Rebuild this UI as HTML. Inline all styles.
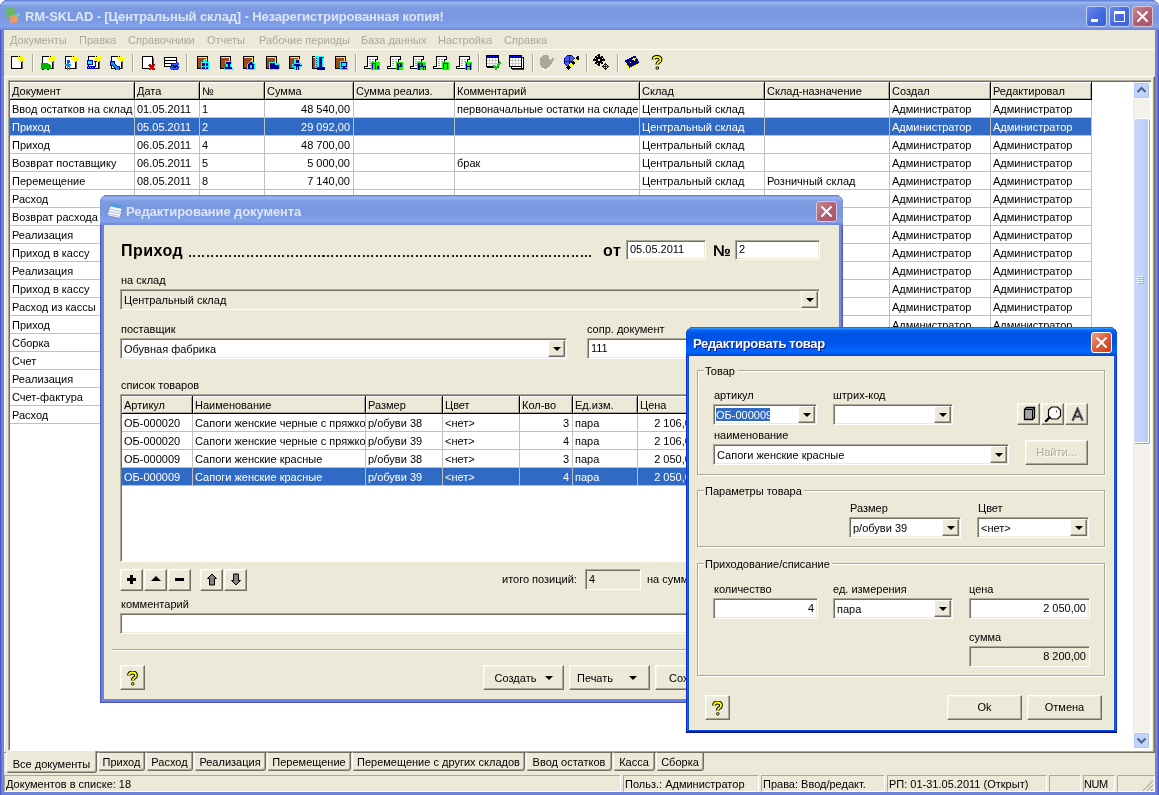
<!DOCTYPE html><html><head><meta charset="utf-8"><title>RM-SKLAD</title><style>
html,body{margin:0;padding:0}
body{width:1159px;height:795px;overflow:hidden;position:relative;background:#fff;font-family:"Liberation Sans",sans-serif;font-size:11px;color:#000;line-height:13px}
div,span{box-sizing:border-box}
.a{position:absolute}
.t{position:absolute;white-space:nowrap;line-height:13px;height:13px}
.face{background:#ECE9D8}
/* main window */
#mw{left:0;top:0;width:1159px;height:796px;border-radius:8px 8px 0 0;background:#7B98E2;overflow:hidden;box-shadow:inset 0 0 0 1px #4E56C4,inset 0 0 0 2px #6676D6,inset 0 0 0 3px #708ADF,inset 0 0 0 4px #6882DA}
#mt{left:0;top:0;width:1159px;height:30px;background:linear-gradient(#6686DE 0,#6686DE 1px,#9BB5EF 2px,#93AEEC 4px,#7F9CE4 6px,#7A97E1 12px,#7B99E3 20px,#82A2EA 26px,#7C98E4 28px,#7088DE 29px,#7088DE 30px)}
.ttl{position:absolute;white-space:nowrap;font-weight:bold;font-size:13px;line-height:16px}
.cb{position:absolute;width:21px;height:21px;border-radius:3px;border:1px solid #fff}
/* grid */
.gh{position:absolute;height:18px;top:0;background:#ECE9D8;border-right:1px solid #000;border-bottom:1px solid #000;box-shadow:inset 1px 1px 0 #fff, inset -1px -1px 0 #ACA899;padding:3px 0 0 2px;white-space:nowrap;overflow:hidden}
.gc{position:absolute;height:18px;border-right:1px solid #C0C0C0;border-bottom:1px solid #C0C0C0;padding:3px 0 0 2px;white-space:nowrap;overflow:hidden;background:#fff}
.gc.r{text-align:right;padding:3px 3px 0 0}
.sel{background:#316AC5 !important;color:#fff}
.sunk{border:1px solid;border-color:#716F64 #fff #fff #716F64;box-shadow:inset 1px 1px 0 #ACA899, inset -1px -1px 0 #ECE9D8}
.edit{position:absolute;background:#fff;border:1px solid;border-color:#ACA899 #fff #fff #ACA899;box-shadow:inset 1px 1px 0 #716F64, inset -1px -1px 0 #ECE9D8;padding:3px 0 0 4px;white-space:nowrap;overflow:hidden}
.edit.face{background:#ECE9D8}
.cbx{padding-top:4px}
.btn{position:absolute;background:#ECE9D8;border:1px solid;border-color:#fff #716F64 #716F64 #fff;box-shadow:inset -1px -1px 0 #ACA899, inset 1px 1px 0 #F4F2E8;text-align:center;white-space:nowrap}
.dd{position:absolute;width:17px;background:#ECE9D8;border:1px solid;border-color:#fff #716F64 #716F64 #fff;box-shadow:inset -1px -1px 0 #ACA899}
.dd:after{content:"";position:absolute;left:4px;top:6px;border:4px solid transparent;border-top:4px solid #000;border-bottom:0}
.grp{position:absolute;border:1px solid #ACA899;box-shadow:1px 1px 0 #fff, inset 1px 1px 0 #fff}
.grp>span{position:absolute;left:6px;top:-6px;background:#ECE9D8;padding:0 2px 0 1px;line-height:13px;white-space:nowrap}
.tab{position:absolute;top:752px;height:19px;background:#ECE9D8;border:1px solid;border-color:#716F64 #716F64 #716F64 #fff;box-shadow:inset -1px -1px 0 #ACA899;border-radius:0 0 3px 3px;padding:3px 0 0 0;text-align:center;white-space:nowrap}
.sp{position:absolute;top:775px;height:17px;border:1px solid;border-color:#ACA899 #fff #fff #ACA899;padding:2px 0 0 1px;white-space:nowrap;overflow:hidden}
</style></head><body><div id="root" class="a" style="left:0;top:0;width:1159px;height:795px;will-change:transform">
<div id="mw" class="a">
<div id="mt" class="a"></div>
<svg class="a" style="left:5px;top:7px" width="18" height="18" viewBox="0 0 18 18"><rect x="1" y="1" width="9" height="9" rx="1.5" fill="#6DB56A"/><rect x="11" y="5" width="5" height="5" rx="1" fill="#7DB4E8" stroke="#5B9BD8" stroke-width=".8"/><rect x="5" y="8" width="8" height="8" rx="1.5" fill="#E89A66" transform="rotate(-8 9 12)"/></svg>
<div class="ttl" style="left:25px;top:9px;color:#DCE6FA;letter-spacing:-0.14px">RM-SKLAD - [Центральный склад] - Незарегистрированная копия!</div>
<div class="cb" style="left:1086px;top:6px;background:linear-gradient(135deg,#6C8CEA,#456BE0 50%,#3E62D6);border-color:#C0CEF4"><div class="a" style="left:4px;top:12px;width:7px;height:3px;background:#fff"></div></div>
<div class="cb" style="left:1109px;top:6px;background:linear-gradient(135deg,#6C8CEA,#456BE0 50%,#3E62D6);border-color:#C0CEF4"><div class="a" style="left:4px;top:4px;width:11px;height:11px;border:1px solid #fff;border-top:3px solid #fff"></div></div>
<div class="cb" style="left:1132px;top:6px;background:linear-gradient(135deg,#C88A98,#B26074 50%,#A85468);border-color:#DCC4D4"><svg class="a" style="left:3px;top:3px" width="13" height="13" viewBox="0 0 13 13"><path d="M2 2L11 11M11 2L2 11" stroke="#fff" stroke-width="2" stroke-linecap="round"/></svg></div>
<div class="a face" style="left:4px;top:30px;width:1151px;height:762px"></div>
</div>
<div class="t" style="left:10px;top:34px;color:#ACA899">Документы</div>
<div class="t" style="left:79px;top:34px;color:#ACA899">Правка</div>
<div class="t" style="left:128px;top:34px;color:#ACA899">Справочники</div>
<div class="t" style="left:207px;top:34px;color:#ACA899">Отчеты</div>
<div class="t" style="left:259px;top:34px;color:#ACA899">Рабочие периоды</div>
<div class="t" style="left:361px;top:34px;color:#ACA899">База данных</div>
<div class="t" style="left:438px;top:34px;color:#ACA899">Настройка</div>
<div class="t" style="left:504px;top:34px;color:#ACA899">Справка</div>
<div class="a" style="left:4px;top:49px;width:1151px;height:1px;background:#fff"></div>
<div class="a" style="left:4px;top:76px;width:1151px;height:677px;border:1px solid;border-color:#fff #716F64 #716F64 #fff;box-shadow:inset -1px -1px 0 #ACA899"></div>
<svg width="0" height="0" style="position:absolute"><defs><pattern id="pg" width="2" height="2" patternUnits="userSpaceOnUse"><rect width="2" height="2" fill="#00C000"/><rect width="1" height="1" fill="#008000"/><rect x="1" y="1" width="1" height="1" fill="#008000"/></pattern><pattern id="pb" width="2" height="2" patternUnits="userSpaceOnUse"><rect width="2" height="2" fill="#00FFFF"/><rect width="1" height="1" fill="#0000C0"/><rect x="1" y="1" width="1" height="1" fill="#0000C0"/></pattern><pattern id="pr" width="2" height="2" patternUnits="userSpaceOnUse"><rect width="2" height="2" fill="#804000"/><rect width="1" height="1" fill="#C04020"/><rect x="1" y="1" width="1" height="1" fill="#C04020"/></pattern><pattern id="pgl" width="2" height="2" patternUnits="userSpaceOnUse"><rect width="2" height="2" fill="#0000C0"/><rect width="1" height="1" fill="#8090E0"/><rect x="1" y="1" width="1" height="1" fill="#8090E0"/></pattern></defs></svg>
<svg class="a" style="left:10px;top:54px" width="16" height="16" viewBox="0 0 16 16" shape-rendering="crispEdges"><rect x="1.500" y="2.500" width="10" height="12" fill="#fff" stroke="#000"/><rect x="2" y="14" width="10" height="1" fill="#000"/><rect x="12" y="4" width="1" height="11" fill="#606060"/><rect x="10" y="1" width="2" height="7" fill="#FFFF00"/><rect x="7" y="4" width="8" height="2" fill="#FFFF00"/><rect x="9" y="3" width="4" height="4" fill="#FFFF00"/><rect x="8" y="2" width="1" height="1" fill="#FFFF00"/><rect x="13" y="2" width="1" height="1" fill="#FFFF00"/><rect x="8" y="7" width="1" height="1" fill="#FFFF00"/><rect x="13" y="7" width="1" height="1" fill="#FFFF00"/></svg>
<div class="a" style="left:32px;top:54px;width:2px;height:18px;border-left:1px solid #ACA899;border-right:1px solid #fff"></div>
<svg class="a" style="left:41px;top:54px" width="16" height="16" viewBox="0 0 16 16" shape-rendering="crispEdges"><rect x="1.500" y="2.500" width="10" height="12" fill="#fff" stroke="#000"/><rect x="2" y="14" width="10" height="1" fill="#000"/><rect x="12" y="4" width="1" height="11" fill="#606060"/><rect x="10" y="1" width="2" height="7" fill="#FFFF00"/><rect x="7" y="4" width="8" height="2" fill="#FFFF00"/><rect x="9" y="3" width="4" height="4" fill="#FFFF00"/><rect x="8" y="2" width="1" height="1" fill="#FFFF00"/><rect x="13" y="2" width="1" height="1" fill="#FFFF00"/><rect x="8" y="7" width="1" height="1" fill="#FFFF00"/><rect x="13" y="7" width="1" height="1" fill="#FFFF00"/><path d="M0 9h6l4 2v4H0z" fill="#00B400"/><rect x="1" y="15" width="2" height="1" fill="#000"/><rect x="6" y="15" width="2" height="1" fill="#000"/></svg>
<svg class="a" style="left:64px;top:54px" width="16" height="16" viewBox="0 0 16 16" shape-rendering="crispEdges"><rect x="1.500" y="2.500" width="10" height="12" fill="#fff" stroke="#000"/><rect x="2" y="14" width="10" height="1" fill="#000"/><rect x="12" y="4" width="1" height="11" fill="#606060"/><rect x="10" y="1" width="2" height="7" fill="#FFFF00"/><rect x="7" y="4" width="8" height="2" fill="#FFFF00"/><rect x="9" y="3" width="4" height="4" fill="#FFFF00"/><rect x="8" y="2" width="1" height="1" fill="#FFFF00"/><rect x="13" y="2" width="1" height="1" fill="#FFFF00"/><rect x="8" y="7" width="1" height="1" fill="#FFFF00"/><rect x="13" y="7" width="1" height="1" fill="#FFFF00"/><path d="M3 6h3v3h-1v1h2v2H6v4H5v-3H4v3H3v-4H1v-2h2V9H3z" fill="#1090F0"/><rect x="3" y="6" width="3" height="3" fill="#0060E0"/></svg>
<svg class="a" style="left:87px;top:54px" width="16" height="16" viewBox="0 0 16 16" shape-rendering="crispEdges"><rect x="1.500" y="2.500" width="10" height="12" fill="#fff" stroke="#000"/><rect x="2" y="14" width="10" height="1" fill="#000"/><rect x="12" y="4" width="1" height="11" fill="#606060"/><rect x="10" y="1" width="2" height="7" fill="#FFFF00"/><rect x="7" y="4" width="8" height="2" fill="#FFFF00"/><rect x="9" y="3" width="4" height="4" fill="#FFFF00"/><rect x="8" y="2" width="1" height="1" fill="#FFFF00"/><rect x="13" y="2" width="1" height="1" fill="#FFFF00"/><rect x="8" y="7" width="1" height="1" fill="#FFFF00"/><rect x="13" y="7" width="1" height="1" fill="#FFFF00"/><rect x="0" y="6" width="6" height="5" fill="#0000C0"/><rect x="1" y="7" width="4" height="3" fill="#00FFFF"/><rect x="0" y="12" width="8" height="3" fill="#0000C0"/><path d="M1 13.500h6" stroke="#00FFFF" stroke-dasharray="1 1"/><path d="M8.500 7v6M7 7.500h3" stroke="#0000C0"/></svg>
<svg class="a" style="left:110px;top:54px" width="16" height="16" viewBox="0 0 16 16" shape-rendering="crispEdges"><rect x="1.500" y="2.500" width="10" height="12" fill="#fff" stroke="#000"/><rect x="2" y="14" width="10" height="1" fill="#000"/><rect x="12" y="4" width="1" height="11" fill="#606060"/><rect x="10" y="1" width="2" height="7" fill="#FFFF00"/><rect x="7" y="4" width="8" height="2" fill="#FFFF00"/><rect x="9" y="3" width="4" height="4" fill="#FFFF00"/><rect x="8" y="2" width="1" height="1" fill="#FFFF00"/><rect x="13" y="2" width="1" height="1" fill="#FFFF00"/><rect x="8" y="7" width="1" height="1" fill="#FFFF00"/><rect x="13" y="7" width="1" height="1" fill="#FFFF00"/><path d="M0 7h4v2l3 3h2v4H5v-2L2 11H0z" fill="#1090F0" stroke="#0000A0" stroke-width="1"/></svg>
<div class="a" style="left:132px;top:54px;width:2px;height:18px;border-left:1px solid #ACA899;border-right:1px solid #fff"></div>
<svg class="a" style="left:141px;top:54px" width="16" height="16" viewBox="0 0 16 16" shape-rendering="crispEdges"><rect x="1.500" y="2.500" width="10" height="12" fill="#fff" stroke="#000"/><rect x="2" y="14" width="10" height="1" fill="#000"/><rect x="12" y="4" width="1" height="11" fill="#606060"/><path d="M8 10.500L13.500 16M13.500 10.500L8 16" stroke="#E00000" stroke-width="2.800"/></svg>
<svg class="a" style="left:164px;top:54px" width="16" height="16" viewBox="0 0 16 16" shape-rendering="crispEdges"><rect x=".5" y="3.500" width="12" height="9" fill="#fff" stroke="#000"/><path d="M1 6.500h11M1 9.500h11" stroke="#000"/><rect x="12" y="4" width="1" height="9" fill="#000"/><path d="M7 12V9h5V7.500l3 2.500-3 2.500V11H9v1z" fill="#2060FF" stroke="#0000C0" stroke-width=".8"/><path d="M14 12v3H9v1.500L6 14l3-2.500V13h3v-1z" fill="#2060FF" stroke="#0000C0" stroke-width=".8"/></svg>
<div class="a" style="left:186px;top:54px;width:2px;height:18px;border-left:1px solid #ACA899;border-right:1px solid #fff"></div>
<svg class="a" style="left:195px;top:54px" width="16" height="16" viewBox="0 0 16 16" shape-rendering="crispEdges"><path d="M2.500 14.500V3.500Q2.500 2.500 3.500 2.500H11Q12.500 2.500 12.500 4V14.500z" fill="#9A4A18" stroke="#000"/><path d="M3 3.500H10.500Q11.500 3.500 11.500 4.500V9" fill="none" stroke="#FFFF00"/><rect x="6" y="8" width="8" height="8" fill="#00FFFF"/><path d="M8 6l2-1 2 1v2H8z" fill="#00FFFF"/><rect x="7" y="9" width="2.500" height="2.500" fill="#000090"/><rect x="10.500" y="9" width="2.500" height="2.500" fill="#000090"/><rect x="7" y="12.500" width="2.500" height="2.500" fill="#000090"/><rect x="10.500" y="12.500" width="2.500" height="2.500" fill="#000090"/></svg>
<svg class="a" style="left:218px;top:54px" width="16" height="16" viewBox="0 0 16 16" shape-rendering="crispEdges"><path d="M2.500 14.500V3.500Q2.500 2.500 3.500 2.500H11Q12.500 2.500 12.500 4V14.500z" fill="#9A4A18" stroke="#000"/><path d="M3 3.500H10.500Q11.500 3.500 11.500 4.500V9" fill="none" stroke="#FFFF00"/><path d="M7 7h7v3h-1v4h2v2H6v-2h2v-4H7z" fill="#00FFFF"/><path d="M8 8h5v1.500h-1.500V13H14v2H7v-2h2.500V9.500H8z" fill="#000090"/></svg>
<svg class="a" style="left:241px;top:54px" width="16" height="16" viewBox="0 0 16 16" shape-rendering="crispEdges"><path d="M2.500 14.500V3.500Q2.500 2.500 3.500 2.500H11Q12.500 2.500 12.500 4V14.500z" fill="#9A4A18" stroke="#000"/><path d="M3 3.500H10.500Q11.500 3.500 11.500 4.500V9" fill="none" stroke="#FFFF00"/><path d="M10 6l5 5h-1v5H6v-5H5z" fill="#00FFFF"/><path d="M10 7.500l3.500 3.500H13v4H7v-4H6.500z" fill="#000090"/><rect x="9" y="11" width="2" height="3" fill="#00FFFF"/></svg>
<svg class="a" style="left:264px;top:54px" width="16" height="16" viewBox="0 0 16 16" shape-rendering="crispEdges"><path d="M2.500 14.500V3.500Q2.500 2.500 3.500 2.500H11Q12.500 2.500 12.500 4V14.500z" fill="#9A4A18" stroke="#000"/><path d="M3 3.500H10.500Q11.500 3.500 11.500 4.500V9" fill="none" stroke="#FFFF00"/><path d="M5 8h6v1h3l2 2v4h-2v1h-3v-1H9v1H6v-1H5z" fill="#00FFFF"/><path d="M6 9h4.500v1.500H13.500l1.500 1.500v2.500H6z" fill="#000090"/></svg>
<svg class="a" style="left:287px;top:54px" width="16" height="16" viewBox="0 0 16 16" shape-rendering="crispEdges"><path d="M2.500 14.500V3.500Q2.500 2.500 3.500 2.500H11Q12.500 2.500 12.500 4V14.500z" fill="#9A4A18" stroke="#000"/><path d="M3 3.500H10.500Q11.500 3.500 11.500 4.500V9" fill="none" stroke="#FFFF00"/><path d="M7 5h6v4h2v4h-2v3H7v-3H5v-3h2z" fill="#00FFFF"/><path d="M8.500 6h3v3h-3zM7 10h6v1h1.500v1H13v0h-1.500v4h-1v-3h-1v3h-1v-4H7v0H5.500v-1H7z" fill="#000090"/></svg>
<svg class="a" style="left:310px;top:54px" width="16" height="16" viewBox="0 0 16 16" shape-rendering="crispEdges"><path d="M2.500 14.500V3.500Q2.500 2.500 3.500 2.500H11Q12.500 2.500 12.500 4V14.500z" fill="#9A4A18" stroke="#000"/><path d="M3 3.500H10.500Q11.500 3.500 11.500 4.500V9" fill="none" stroke="#FFFF00"/><rect x="5" y="2" width="8" height="12" fill="#00FFFF"/><rect x="9" y="3" width="2.500" height="10" fill="#000090"/><path d="M6.500 4v9" stroke="#0060D0" stroke-dasharray="1 1"/><path d="M7 13h8v3H7z" fill="#000090"/><rect x="12" y="3" width="2" height="1" fill="#000090"/></svg>
<svg class="a" style="left:333px;top:54px" width="16" height="16" viewBox="0 0 16 16" shape-rendering="crispEdges"><path d="M2.500 14.500V3.500Q2.500 2.500 3.500 2.500H11Q12.500 2.500 12.500 4V14.500z" fill="#9A4A18" stroke="#000"/><path d="M3 3.500H10.500Q11.500 3.500 11.500 4.500V9" fill="none" stroke="#FFFF00"/><rect x="7" y="7" width="8" height="9" fill="#00FFFF"/><rect x="8.500" y="8.500" width="5" height="3.500" fill="none" stroke="#000090"/><path d="M11 12v2M8 14.500h6" stroke="#000090" stroke-width="1.200"/></svg>
<div class="a" style="left:355px;top:54px;width:2px;height:18px;border-left:1px solid #ACA899;border-right:1px solid #fff"></div>
<svg class="a" style="left:364px;top:54px" width="16" height="16" viewBox="0 0 16 16" shape-rendering="crispEdges"><path d="M3.500 3.500Q3.500 2.500 5 2.500H12.500Q13.500 2.500 13.500 4V5.500H11.500V14.500H2Q.5 14.500 .5 13.500Q.5 12.500 2 12.500H3.500z" fill="#fff" stroke="#000"/><path d="M5 5h2M8 5h2M5 7h2M8 7h2M5 9h2M5 11h2" stroke="#A0A0A0"/><rect x="1" y="14" width="10" height="1" fill="#000"/><rect x="7" y="8" width="9" height="8" fill="#00FF00"/><path d="M8 9.500h4M8.500 9v6M11.500 9v6" stroke="#000080" stroke-width="1.200" fill="none"/><rect x="13" y="12" width="1.500" height="3" fill="#000080"/></svg>
<svg class="a" style="left:387px;top:54px" width="16" height="16" viewBox="0 0 16 16" shape-rendering="crispEdges"><path d="M3.500 3.500Q3.500 2.500 5 2.500H12.500Q13.500 2.500 13.500 4V5.500H11.500V14.500H2Q.5 14.500 .5 13.500Q.5 12.500 2 12.500H3.500z" fill="#fff" stroke="#000"/><path d="M5 5h2M8 5h2M5 7h2M8 7h2M5 9h2M5 11h2" stroke="#A0A0A0"/><rect x="1" y="14" width="10" height="1" fill="#000"/><rect x="9" y="8" width="7" height="8" fill="#00FF00"/><path d="M11 9v6.500M11 9.500h3v3h-3" stroke="#000080" stroke-width="1.400" fill="none"/></svg>
<svg class="a" style="left:410px;top:54px" width="16" height="16" viewBox="0 0 16 16" shape-rendering="crispEdges"><path d="M3.500 3.500Q3.500 2.500 5 2.500H12.500Q13.500 2.500 13.500 4V5.500H11.500V14.500H2Q.5 14.500 .5 13.500Q.5 12.500 2 12.500H3.500z" fill="#fff" stroke="#000"/><path d="M5 5h2M8 5h2M5 7h2M8 7h2M5 9h2M5 11h2" stroke="#A0A0A0"/><rect x="1" y="14" width="10" height="1" fill="#000"/><rect x="7" y="8" width="9" height="8" fill="#00FF00"/><path d="M9 9v6.500M9 9.500h3v3h-3" stroke="#000080" stroke-width="1.400" fill="none"/><path d="M13.500 16v-4h2v4" stroke="#000080" fill="none" stroke-width=".9"/></svg>
<svg class="a" style="left:433px;top:54px" width="16" height="16" viewBox="0 0 16 16" shape-rendering="crispEdges"><path d="M3.500 3.500Q3.500 2.500 5 2.500H12.500Q13.500 2.500 13.500 4V5.500H11.500V14.500H2Q.5 14.500 .5 13.500Q.5 12.500 2 12.500H3.500z" fill="#fff" stroke="#000"/><path d="M5 5h2M8 5h2M5 7h2M8 7h2M5 9h2M5 11h2" stroke="#A0A0A0"/><rect x="1" y="14" width="10" height="1" fill="#000"/><rect x="9" y="8" width="7" height="8" fill="#00FF00"/><path d="M10 9.500h5M10.500 9v6M14.500 9v6" stroke="#000080" stroke-width="1.200" fill="none"/></svg>
<svg class="a" style="left:456px;top:54px" width="16" height="16" viewBox="0 0 16 16" shape-rendering="crispEdges"><path d="M3.500 3.500Q3.500 2.500 5 2.500H12.500Q13.500 2.500 13.500 4V5.500H11.500V14.500H2Q.5 14.500 .5 13.500Q.5 12.500 2 12.500H3.500z" fill="#fff" stroke="#000"/><path d="M5 5h2M8 5h2M5 7h2M8 7h2M5 9h2M5 11h2" stroke="#A0A0A0"/><rect x="1" y="14" width="10" height="1" fill="#000"/><rect x="9" y="8" width="7" height="8" fill="#00FF00"/><path d="M10.500 9v6.500M14.500 9v6.500M10.500 12.500h4" stroke="#000080" stroke-width="1.300" fill="none"/></svg>
<div class="a" style="left:478px;top:54px;width:2px;height:18px;border-left:1px solid #ACA899;border-right:1px solid #fff"></div>
<svg class="a" style="left:485px;top:54px" width="16" height="16" viewBox="0 0 16 16" shape-rendering="crispEdges"><rect x="1.500" y="1.500" width="12" height="11" fill="#fff" stroke="#000"/><rect x="2" y="2" width="11" height="2" fill="#0000E0"/><path d="M2 6.500h11M2 9.500h11M4.500 4v8M7.500 4v8M10.500 4v8" stroke="#C8C8C8"/><rect x="13" y="2" width="1" height="12" fill="#000"/><rect x="2" y="13" width="12" height="1" fill="#000"/><path d="M8.500 11.500L11 14.500L15.500 8" fill="none" stroke="#00D000" stroke-width="2.200"/></svg>
<svg class="a" style="left:508px;top:54px" width="16" height="16" viewBox="0 0 16 16" shape-rendering="crispEdges"><rect x="3.500" y="3.500" width="12" height="11" fill="#fff" stroke="#000"/><rect x="15" y="5" width="1" height="2" fill="#0000E0"/><rect x="4" y="15" width="12" height="1" fill="#404040"/><rect x="1.500" y="1.500" width="12" height="11" fill="#fff" stroke="#000"/><rect x="2" y="2" width="11" height="2" fill="#0000E0"/><path d="M2 6.500h11M2 9.500h11M4.500 4v8M7.500 4v8M10.500 4v8" stroke="#C8C8C8"/><rect x="13" y="2" width="1" height="12" fill="#000"/></svg>
<div class="a" style="left:532px;top:54px;width:2px;height:18px;border-left:1px solid #ACA899;border-right:1px solid #fff"></div>
<svg class="a" style="left:538px;top:54px" width="16" height="16" viewBox="0 0 16 16" shape-rendering="crispEdges"><path d="M2 4l3-3h4l2 2 1 3 3-2 1 1-2 4-2 3-3 3H6l-3-2-1-4z" fill="#ACA899"/><path d="M4 14l2 1.500h3l4-3.500" stroke="#fff" fill="none"/></svg>
<svg class="a" style="left:563px;top:54px" width="16" height="16" viewBox="0 0 16 16" shape-rendering="crispEdges"><circle cx="6.500" cy="7" r="5.500" fill="#4860D8" stroke="#0000A0"/><path d="M6.500 1.500v11M1 7h11" stroke="#0000A0" stroke-width=".8"/><path d="M4 15L16 3" stroke="#000" stroke-width="3"/><path d="M6.500 12.500L9 10M11 8L13.500 5.500" stroke="#FFFF00" stroke-width="3"/></svg>
<div class="a" style="left:586px;top:54px;width:2px;height:18px;border-left:1px solid #ACA899;border-right:1px solid #fff"></div>
<svg class="a" style="left:593px;top:54px" width="16" height="16" viewBox="0 0 16 16" shape-rendering="crispEdges"><g fill="#000"><circle cx="6" cy="6" r="3"/><circle cx="6" cy="1.800" r="1.600"/><circle cx="6" cy="10.200" r="1.600"/><circle cx="1.800" cy="6" r="1.600"/><circle cx="10.200" cy="6" r="1.600"/><circle cx="3" cy="3" r="1.500"/><circle cx="9" cy="3" r="1.500"/><circle cx="3" cy="9" r="1.500"/><circle cx="9" cy="9" r="1.500"/></g><circle cx="6" cy="6" r="1.300" fill="#ECE9D8"/><path d="M12.500 9.500l3 3-3 3-3-3z" fill="#ECE9D8" stroke="#000"/><path d="M12.500 10v5M10 12.500h5" stroke="#000" stroke-width=".8"/></svg>
<div class="a" style="left:617px;top:54px;width:2px;height:18px;border-left:1px solid #ACA899;border-right:1px solid #fff"></div>
<svg class="a" style="left:624px;top:54px" width="16" height="16" viewBox="0 0 16 16" shape-rendering="crispEdges"><path d="M1 7L11 2l4 7L5 14z" fill="#000090" stroke="#000090"/><path d="M1.500 8.500L5 14.500L15 9.500" fill="none" stroke="#FFFF00" stroke-width="1.200"/><path d="M8 5.500l3-1-1 2.500" fill="none" stroke="#FFFF00"/><rect x="6" y="8" width="1" height="1" fill="#FFFF00"/></svg>
<svg class="a" style="left:649px;top:54px" width="16" height="16" viewBox="0 0 16 16" shape-rendering="crispEdges"><g shape-rendering="auto"><path d="M4.500 5.500Q4.500 2.800 8 2.800Q11.500 2.800 11.500 5.500Q11.500 7.200 9.500 8.300Q8.300 9 8.300 10.500" fill="none" stroke="#000" stroke-width="3.800"/><path d="M4.500 5.500Q4.500 2.800 8 2.800Q11.500 2.800 11.500 5.500Q11.500 7.200 9.500 8.300Q8.300 9 8.300 10.500" fill="none" stroke="#FFFF00" stroke-width="1.800"/><circle cx="8.300" cy="14" r="1.300" fill="#FFFF00" stroke="#000" stroke-width="1"/></g></svg>
<div class="a" style="left:8px;top:80px;width:1144px;height:671px;background:#fff;border:1px solid;border-color:#ACA899 #fff #fff #ACA899;box-shadow:inset 1px 1px 0 #716F64"></div>
<div class="a" style="left:0;top:82px;width:1092px;height:340px">
<div class="gh" style="left:10px;width:125px">Документ</div>
<div class="gh" style="left:135px;width:65px">Дата</div>
<div class="gh" style="left:200px;width:65px">№</div>
<div class="gh" style="left:265px;width:89px">Сумма</div>
<div class="gh" style="left:354px;width:101px">Сумма реализ.</div>
<div class="gh" style="left:455px;width:185px">Комментарий</div>
<div class="gh" style="left:640px;width:125px">Склад</div>
<div class="gh" style="left:765px;width:125px">Склад-назначение</div>
<div class="gh" style="left:890px;width:101px">Создал</div>
<div class="gh" style="left:991px;width:101px">Редактировал</div>
<div class="gc" style="left:10px;top:18px;width:125px">Ввод остатков на склад</div>
<div class="gc" style="left:135px;top:18px;width:65px">01.05.2011</div>
<div class="gc" style="left:200px;top:18px;width:65px">1</div>
<div class="gc r" style="left:265px;top:18px;width:89px">48 540,00</div>
<div class="gc" style="left:354px;top:18px;width:101px"></div>
<div class="gc" style="left:455px;top:18px;width:185px">первоначальные остатки на складе</div>
<div class="gc" style="left:640px;top:18px;width:125px">Центральный склад</div>
<div class="gc" style="left:765px;top:18px;width:125px"></div>
<div class="gc" style="left:890px;top:18px;width:101px">Администратор</div>
<div class="gc" style="left:991px;top:18px;width:101px">Администратор</div>
<div class="gc sel" style="left:10px;top:36px;width:125px">Приход</div>
<div class="gc sel" style="left:135px;top:36px;width:65px">05.05.2011</div>
<div class="gc sel" style="left:200px;top:36px;width:65px">2</div>
<div class="gc r sel" style="left:265px;top:36px;width:89px">29 092,00</div>
<div class="gc sel" style="left:354px;top:36px;width:101px"></div>
<div class="gc sel" style="left:455px;top:36px;width:185px"></div>
<div class="gc sel" style="left:640px;top:36px;width:125px">Центральный склад</div>
<div class="gc sel" style="left:765px;top:36px;width:125px"></div>
<div class="gc sel" style="left:890px;top:36px;width:101px">Администратор</div>
<div class="gc sel" style="left:991px;top:36px;width:101px">Администратор</div>
<div class="gc" style="left:10px;top:54px;width:125px">Приход</div>
<div class="gc" style="left:135px;top:54px;width:65px">06.05.2011</div>
<div class="gc" style="left:200px;top:54px;width:65px">4</div>
<div class="gc r" style="left:265px;top:54px;width:89px">48 700,00</div>
<div class="gc" style="left:354px;top:54px;width:101px"></div>
<div class="gc" style="left:455px;top:54px;width:185px"></div>
<div class="gc" style="left:640px;top:54px;width:125px">Центральный склад</div>
<div class="gc" style="left:765px;top:54px;width:125px"></div>
<div class="gc" style="left:890px;top:54px;width:101px">Администратор</div>
<div class="gc" style="left:991px;top:54px;width:101px">Администратор</div>
<div class="gc" style="left:10px;top:72px;width:125px">Возврат поставщику</div>
<div class="gc" style="left:135px;top:72px;width:65px">06.05.2011</div>
<div class="gc" style="left:200px;top:72px;width:65px">5</div>
<div class="gc r" style="left:265px;top:72px;width:89px">5 000,00</div>
<div class="gc" style="left:354px;top:72px;width:101px"></div>
<div class="gc" style="left:455px;top:72px;width:185px">брак</div>
<div class="gc" style="left:640px;top:72px;width:125px">Центральный склад</div>
<div class="gc" style="left:765px;top:72px;width:125px"></div>
<div class="gc" style="left:890px;top:72px;width:101px">Администратор</div>
<div class="gc" style="left:991px;top:72px;width:101px">Администратор</div>
<div class="gc" style="left:10px;top:90px;width:125px">Перемещение</div>
<div class="gc" style="left:135px;top:90px;width:65px">08.05.2011</div>
<div class="gc" style="left:200px;top:90px;width:65px">8</div>
<div class="gc r" style="left:265px;top:90px;width:89px">7 140,00</div>
<div class="gc" style="left:354px;top:90px;width:101px"></div>
<div class="gc" style="left:455px;top:90px;width:185px"></div>
<div class="gc" style="left:640px;top:90px;width:125px">Центральный склад</div>
<div class="gc" style="left:765px;top:90px;width:125px">Розничный склад</div>
<div class="gc" style="left:890px;top:90px;width:101px">Администратор</div>
<div class="gc" style="left:991px;top:90px;width:101px">Администратор</div>
<div class="gc" style="left:10px;top:108px;width:125px">Расход</div>
<div class="gc" style="left:135px;top:108px;width:65px">10.05.2011</div>
<div class="gc" style="left:200px;top:108px;width:65px">9</div>
<div class="gc r" style="left:265px;top:108px;width:89px">8 970,00</div>
<div class="gc" style="left:354px;top:108px;width:101px"></div>
<div class="gc" style="left:455px;top:108px;width:185px"></div>
<div class="gc" style="left:640px;top:108px;width:125px">Центральный склад</div>
<div class="gc" style="left:765px;top:108px;width:125px"></div>
<div class="gc" style="left:890px;top:108px;width:101px">Администратор</div>
<div class="gc" style="left:991px;top:108px;width:101px">Администратор</div>
<div class="gc" style="left:10px;top:126px;width:125px">Возврат расхода</div>
<div class="gc" style="left:135px;top:126px;width:65px"></div>
<div class="gc" style="left:200px;top:126px;width:65px"></div>
<div class="gc r" style="left:265px;top:126px;width:89px"></div>
<div class="gc" style="left:354px;top:126px;width:101px"></div>
<div class="gc" style="left:455px;top:126px;width:185px"></div>
<div class="gc" style="left:640px;top:126px;width:125px"></div>
<div class="gc" style="left:765px;top:126px;width:125px"></div>
<div class="gc" style="left:890px;top:126px;width:101px">Администратор</div>
<div class="gc" style="left:991px;top:126px;width:101px">Администратор</div>
<div class="gc" style="left:10px;top:144px;width:125px">Реализация</div>
<div class="gc" style="left:135px;top:144px;width:65px"></div>
<div class="gc" style="left:200px;top:144px;width:65px"></div>
<div class="gc r" style="left:265px;top:144px;width:89px"></div>
<div class="gc" style="left:354px;top:144px;width:101px"></div>
<div class="gc" style="left:455px;top:144px;width:185px"></div>
<div class="gc" style="left:640px;top:144px;width:125px"></div>
<div class="gc" style="left:765px;top:144px;width:125px"></div>
<div class="gc" style="left:890px;top:144px;width:101px">Администратор</div>
<div class="gc" style="left:991px;top:144px;width:101px">Администратор</div>
<div class="gc" style="left:10px;top:162px;width:125px">Приход в кассу</div>
<div class="gc" style="left:135px;top:162px;width:65px"></div>
<div class="gc" style="left:200px;top:162px;width:65px"></div>
<div class="gc r" style="left:265px;top:162px;width:89px"></div>
<div class="gc" style="left:354px;top:162px;width:101px"></div>
<div class="gc" style="left:455px;top:162px;width:185px"></div>
<div class="gc" style="left:640px;top:162px;width:125px"></div>
<div class="gc" style="left:765px;top:162px;width:125px"></div>
<div class="gc" style="left:890px;top:162px;width:101px">Администратор</div>
<div class="gc" style="left:991px;top:162px;width:101px">Администратор</div>
<div class="gc" style="left:10px;top:180px;width:125px">Реализация</div>
<div class="gc" style="left:135px;top:180px;width:65px"></div>
<div class="gc" style="left:200px;top:180px;width:65px"></div>
<div class="gc r" style="left:265px;top:180px;width:89px"></div>
<div class="gc" style="left:354px;top:180px;width:101px"></div>
<div class="gc" style="left:455px;top:180px;width:185px"></div>
<div class="gc" style="left:640px;top:180px;width:125px"></div>
<div class="gc" style="left:765px;top:180px;width:125px"></div>
<div class="gc" style="left:890px;top:180px;width:101px">Администратор</div>
<div class="gc" style="left:991px;top:180px;width:101px">Администратор</div>
<div class="gc" style="left:10px;top:198px;width:125px">Приход в кассу</div>
<div class="gc" style="left:135px;top:198px;width:65px"></div>
<div class="gc" style="left:200px;top:198px;width:65px"></div>
<div class="gc r" style="left:265px;top:198px;width:89px"></div>
<div class="gc" style="left:354px;top:198px;width:101px"></div>
<div class="gc" style="left:455px;top:198px;width:185px"></div>
<div class="gc" style="left:640px;top:198px;width:125px"></div>
<div class="gc" style="left:765px;top:198px;width:125px"></div>
<div class="gc" style="left:890px;top:198px;width:101px">Администратор</div>
<div class="gc" style="left:991px;top:198px;width:101px">Администратор</div>
<div class="gc" style="left:10px;top:216px;width:125px">Расход из кассы</div>
<div class="gc" style="left:135px;top:216px;width:65px"></div>
<div class="gc" style="left:200px;top:216px;width:65px"></div>
<div class="gc r" style="left:265px;top:216px;width:89px"></div>
<div class="gc" style="left:354px;top:216px;width:101px"></div>
<div class="gc" style="left:455px;top:216px;width:185px"></div>
<div class="gc" style="left:640px;top:216px;width:125px"></div>
<div class="gc" style="left:765px;top:216px;width:125px"></div>
<div class="gc" style="left:890px;top:216px;width:101px">Администратор</div>
<div class="gc" style="left:991px;top:216px;width:101px">Администратор</div>
<div class="gc" style="left:10px;top:234px;width:125px">Приход</div>
<div class="gc" style="left:135px;top:234px;width:65px"></div>
<div class="gc" style="left:200px;top:234px;width:65px"></div>
<div class="gc r" style="left:265px;top:234px;width:89px"></div>
<div class="gc" style="left:354px;top:234px;width:101px"></div>
<div class="gc" style="left:455px;top:234px;width:185px"></div>
<div class="gc" style="left:640px;top:234px;width:125px"></div>
<div class="gc" style="left:765px;top:234px;width:125px"></div>
<div class="gc" style="left:890px;top:234px;width:101px">Администратор</div>
<div class="gc" style="left:991px;top:234px;width:101px">Администратор</div>
<div class="gc" style="left:10px;top:252px;width:125px">Сборка</div>
<div class="gc" style="left:135px;top:252px;width:65px"></div>
<div class="gc" style="left:200px;top:252px;width:65px"></div>
<div class="gc r" style="left:265px;top:252px;width:89px"></div>
<div class="gc" style="left:354px;top:252px;width:101px"></div>
<div class="gc" style="left:455px;top:252px;width:185px"></div>
<div class="gc" style="left:640px;top:252px;width:125px"></div>
<div class="gc" style="left:765px;top:252px;width:125px"></div>
<div class="gc" style="left:890px;top:252px;width:101px">Администратор</div>
<div class="gc" style="left:991px;top:252px;width:101px">Администратор</div>
<div class="gc" style="left:10px;top:270px;width:125px">Счет</div>
<div class="gc" style="left:135px;top:270px;width:65px"></div>
<div class="gc" style="left:200px;top:270px;width:65px"></div>
<div class="gc r" style="left:265px;top:270px;width:89px"></div>
<div class="gc" style="left:354px;top:270px;width:101px"></div>
<div class="gc" style="left:455px;top:270px;width:185px"></div>
<div class="gc" style="left:640px;top:270px;width:125px"></div>
<div class="gc" style="left:765px;top:270px;width:125px"></div>
<div class="gc" style="left:890px;top:270px;width:101px">Администратор</div>
<div class="gc" style="left:991px;top:270px;width:101px">Администратор</div>
<div class="gc" style="left:10px;top:288px;width:125px">Реализация</div>
<div class="gc" style="left:135px;top:288px;width:65px"></div>
<div class="gc" style="left:200px;top:288px;width:65px"></div>
<div class="gc r" style="left:265px;top:288px;width:89px"></div>
<div class="gc" style="left:354px;top:288px;width:101px"></div>
<div class="gc" style="left:455px;top:288px;width:185px"></div>
<div class="gc" style="left:640px;top:288px;width:125px"></div>
<div class="gc" style="left:765px;top:288px;width:125px"></div>
<div class="gc" style="left:890px;top:288px;width:101px">Администратор</div>
<div class="gc" style="left:991px;top:288px;width:101px">Администратор</div>
<div class="gc" style="left:10px;top:306px;width:125px">Счет-фактура</div>
<div class="gc" style="left:135px;top:306px;width:65px"></div>
<div class="gc" style="left:200px;top:306px;width:65px"></div>
<div class="gc r" style="left:265px;top:306px;width:89px"></div>
<div class="gc" style="left:354px;top:306px;width:101px"></div>
<div class="gc" style="left:455px;top:306px;width:185px"></div>
<div class="gc" style="left:640px;top:306px;width:125px"></div>
<div class="gc" style="left:765px;top:306px;width:125px"></div>
<div class="gc" style="left:890px;top:306px;width:101px">Администратор</div>
<div class="gc" style="left:991px;top:306px;width:101px">Администратор</div>
<div class="gc" style="left:10px;top:324px;width:125px">Расход</div>
<div class="gc" style="left:135px;top:324px;width:65px"></div>
<div class="gc" style="left:200px;top:324px;width:65px"></div>
<div class="gc r" style="left:265px;top:324px;width:89px"></div>
<div class="gc" style="left:354px;top:324px;width:101px"></div>
<div class="gc" style="left:455px;top:324px;width:185px"></div>
<div class="gc" style="left:640px;top:324px;width:125px"></div>
<div class="gc" style="left:765px;top:324px;width:125px"></div>
<div class="gc" style="left:890px;top:324px;width:101px">Администратор</div>
<div class="gc" style="left:991px;top:324px;width:101px">Администратор</div>
</div>
<div class="a" style="left:1133px;top:82px;width:17px;height:667px;background:#F3F1EA;border-left:1px solid #EDEBE0"></div>
<svg class="a" style="left:1133px;top:82px" width="17" height="17" viewBox="0 0 17 17"><rect x=".5" y=".5" width="16" height="16" rx="2" fill="#C2D3FC" stroke="#fff"/><rect x="1.5" y="1.5" width="14" height="14" rx="1.5" fill="none" stroke="#B0C4F5"/><path d="M4.5 10L8.5 6L12.5 10" fill="none" stroke="#4D6185" stroke-width="2"/></svg>
<svg class="a" style="left:1133px;top:732px" width="17" height="17" viewBox="0 0 17 17"><rect x=".5" y=".5" width="16" height="16" rx="2" fill="#C2D3FC" stroke="#fff"/><rect x="1.5" y="1.5" width="14" height="14" rx="1.5" fill="none" stroke="#B0C4F5"/><path d="M4.5 6.5L8.5 10.5L12.5 6.5" fill="none" stroke="#4D6185" stroke-width="2"/></svg>
<div class="a" style="left:1133px;top:118px;width:16px;height:325px;border-radius:2px;background:linear-gradient(90deg,#C9D8FC,#C1D2FB 60%,#B7C9F6);border:1px solid #fff;box-shadow:1px 1px 0 #8FAAE0"></div>
<div class="a" style="left:1137px;top:276px;width:6px;height:1px;background:#EEF4FE"></div><div class="a" style="left:1138px;top:277px;width:6px;height:1px;background:#8CB0F8"></div>
<div class="a" style="left:1137px;top:278px;width:6px;height:1px;background:#EEF4FE"></div><div class="a" style="left:1138px;top:279px;width:6px;height:1px;background:#8CB0F8"></div>
<div class="a" style="left:1137px;top:280px;width:6px;height:1px;background:#EEF4FE"></div><div class="a" style="left:1138px;top:281px;width:6px;height:1px;background:#8CB0F8"></div>
<div class="a" style="left:1137px;top:282px;width:6px;height:1px;background:#EEF4FE"></div><div class="a" style="left:1138px;top:283px;width:6px;height:1px;background:#8CB0F8"></div>
<div class="a" style="left:5px;top:753px;width:1148px;height:22px;background:#ECE9D8"></div>
<div class="tab" style="left:98px;width:47px">Приход</div>
<div class="tab" style="left:146px;width:47px">Расход</div>
<div class="tab" style="left:194px;width:72px">Реализация</div>
<div class="tab" style="left:267px;width:84px">Перемещение</div>
<div class="tab" style="left:352px;width:173px">Перемещение с других складов</div>
<div class="tab" style="left:526px;width:86px">Ввод остатков</div>
<div class="tab" style="left:613px;width:42px">Касса</div>
<div class="tab" style="left:656px;width:48px">Сборка</div>
<div class="tab" style="left:6px;top:751px;width:91px;height:22px;padding-top:7px;border-top:0">Все документы</div>
<div class="sp" style="left:4px;width:617px">Документов в списке: 18</div>
<div class="sp" style="left:623px;width:136px">Польз.: Администратор</div>
<div class="sp" style="left:761px;width:124px">Права: Ввод/редакт.</div>
<div class="sp" style="left:887px;width:160px">РП: 01-31.05.2011 (Открыт)</div>
<div class="sp" style="left:1049px;width:32px"></div>
<div class="sp" style="left:1083px;width:32px;letter-spacing:-.4px;padding-left:0">NUM</div>
<div class="sp" style="left:1117px;width:38px"></div>
<svg class="a" style="left:1140px;top:778px" width="14" height="14" viewBox="0 0 14 14"><path d="M13 3L3 13M13 7L7 13M13 11L11 13" stroke="#B8B4A2" stroke-width="1.6"/><path d="M13.8 3.8L3.8 13.8M13.8 7.8L7.8 13.8M13.8 11.8L11.8 13.8" stroke="#fff" stroke-width=".8"/></svg>
<div class="a" style="left:100px;top:195px;width:743px;height:508px;background:#7A96DF;border-radius:8px 8px 0 0;overflow:hidden;box-shadow:inset 0 0 0 1px #4E56C4,inset 0 0 0 2px #6676D6,inset 0 0 0 3px #708ADF,inset 0 0 0 4px #6882DA">
<div class="a" style="left:0;top:0;width:743px;height:30px;background:linear-gradient(#6686DE 0,#6686DE 1px,#9BB5EF 2px,#93AEEC 4px,#7F9CE4 6px,#7A97E1 12px,#7B99E3 20px,#82A2EA 26px,#7C98E4 28px,#7088DE 29px,#7088DE 30px)"></div>
<svg class="a" style="left:6px;top:7px" width="18" height="18" viewBox="0 0 18 18"><path d="M5 1L17 3.500L14 16.500L1 13.500z" fill="#F6F8FC" stroke="#7C88B4" stroke-width=".9"/><path d="M5 1L17 3.500L16.200 7L4 4.300z" fill="#4C9AEC"/><path d="M3.500 7L15 9.500M2.800 9.500L14.400 12M2.200 12L13.800 14.500" stroke="#AEB8D0" stroke-width=".9"/></svg>
<div class="ttl" style="left:26px;top:9px;color:#DCE6FA;letter-spacing:-0.1px">Редактирование документа</div>
<div class="cb" style="left:716px;top:6px;background:linear-gradient(135deg,#C88A98,#B26074 50%,#A85468);border-color:#DCC4D4"><svg class="a" style="left:3px;top:3px" width="13" height="13" viewBox="0 0 13 13"><path d="M2 2L11 11M11 2L2 11" stroke="#fff" stroke-width="2" stroke-linecap="round"/></svg></div>
<div class="a face" style="left:4px;top:30px;width:735px;height:474px"></div>
</div>
<div class="a" style="left:121px;top:242px;font-size:16px;font-weight:bold;line-height:18px;white-space:nowrap;letter-spacing:.45px">Приход</div>
<div class="a" style="left:189px;top:255px;width:405px;height:2px;opacity:.85;background:repeating-linear-gradient(90deg,#000 0,#000 2px,transparent 2px,transparent 4.450px)"></div>
<div class="a" style="left:603px;top:242px;font-size:16px;font-weight:bold;line-height:18px;letter-spacing:.5px">от</div>
<div class="edit" style="left:626px;top:240px;width:80px;height:20px;padding:2px 0 0 3px">05.05.2011</div>
<div class="a" style="left:713px;top:242px;font-size:16px;font-weight:bold;line-height:18px;letter-spacing:-1px">№</div>
<div class="edit" style="left:735px;top:240px;width:85px;height:20px;padding:2px 0 0 3px">2</div>
<div class="t" style="left:121px;top:274px">на склад</div>
<div class="cbx edit face" style="left:120px;top:289px;width:700px;height:21px;padding-left:3px">Центральный склад</div>
<div class="dd" style="left:801px;top:291px;height:17px"></div>
<div class="t" style="left:121px;top:323px">поставщик</div>
<div class="cbx edit" style="left:120px;top:338px;width:447px;height:21px;padding-left:3px">Обувная фабрика</div>
<div class="dd" style="left:548px;top:340px;height:17px"></div>
<div class="t" style="left:587px;top:323px">сопр. документ</div>
<div class="edit" style="left:587px;top:338px;width:233px;height:21px;padding-left:3px">111</div>
<div class="t" style="left:121px;top:379px">список товаров</div>
<div class="a" style="left:120px;top:394px;width:700px;height:168px;background:#fff;border:1px solid;border-color:#ACA899 #fff #fff #ACA899;box-shadow:inset 1px 1px 0 #716F64"></div>
<div class="a" style="left:0;top:396px;width:818px;height:100px;overflow:hidden">
<div class="gh" style="left:122px;width:71px">Артикул</div>
<div class="gh" style="left:193px;width:173px">Наименование</div>
<div class="gh" style="left:366px;width:77px">Размер</div>
<div class="gh" style="left:443px;width:77px">Цвет</div>
<div class="gh" style="left:520px;width:53px">Кол-во</div>
<div class="gh" style="left:573px;width:65px">Ед.изм.</div>
<div class="gh" style="left:638px;width:63px">Цена</div>
<div class="gc" style="left:122px;top:18px;width:71px">ОБ-000020</div>
<div class="gc" style="left:193px;top:18px;width:173px">Сапоги женские черные с пряжкой</div>
<div class="gc" style="left:366px;top:18px;width:77px">р/обуви 38</div>
<div class="gc" style="left:443px;top:18px;width:77px">&lt;нет&gt;</div>
<div class="gc r" style="left:520px;top:18px;width:53px">3</div>
<div class="gc" style="left:573px;top:18px;width:65px">пара</div>
<div class="gc r" style="left:638px;top:18px;width:63px">2 106,00</div>
<div class="gc" style="left:122px;top:36px;width:71px">ОБ-000020</div>
<div class="gc" style="left:193px;top:36px;width:173px">Сапоги женские черные с пряжкой</div>
<div class="gc" style="left:366px;top:36px;width:77px">р/обуви 39</div>
<div class="gc" style="left:443px;top:36px;width:77px">&lt;нет&gt;</div>
<div class="gc r" style="left:520px;top:36px;width:53px">4</div>
<div class="gc" style="left:573px;top:36px;width:65px">пара</div>
<div class="gc r" style="left:638px;top:36px;width:63px">2 106,00</div>
<div class="gc" style="left:122px;top:54px;width:71px">ОБ-000009</div>
<div class="gc" style="left:193px;top:54px;width:173px">Сапоги женские красные</div>
<div class="gc" style="left:366px;top:54px;width:77px">р/обуви 38</div>
<div class="gc" style="left:443px;top:54px;width:77px">&lt;нет&gt;</div>
<div class="gc r" style="left:520px;top:54px;width:53px">3</div>
<div class="gc" style="left:573px;top:54px;width:65px">пара</div>
<div class="gc r" style="left:638px;top:54px;width:63px">2 050,00</div>
<div class="gc sel" style="left:122px;top:72px;width:71px">ОБ-000009</div>
<div class="gc sel" style="left:193px;top:72px;width:173px">Сапоги женские красные</div>
<div class="gc sel" style="left:366px;top:72px;width:77px">р/обуви 39</div>
<div class="gc sel" style="left:443px;top:72px;width:77px">&lt;нет&gt;</div>
<div class="gc r sel" style="left:520px;top:72px;width:53px">4</div>
<div class="gc sel" style="left:573px;top:72px;width:65px">пара</div>
<div class="gc r sel" style="left:638px;top:72px;width:63px">2 050,00</div>
</div>
<div class="btn" style="left:120px;top:569px;width:23px;height:22px"><div class="a" style="left:6px;top:8px;width:9px;height:3px;background:#000"></div><div class="a" style="left:9px;top:5px;width:3px;height:9px;background:#000"></div></div>
<div class="btn" style="left:144px;top:569px;width:23px;height:22px"><div class="a" style="left:6px;top:6px;border:5px solid transparent;border-bottom:5px solid #000;border-top:0"></div></div>
<div class="btn" style="left:168px;top:569px;width:23px;height:22px"><div class="a" style="left:6px;top:8px;width:9px;height:3px;background:#000"></div></div>
<div class="btn" style="left:200px;top:569px;width:23px;height:22px"><svg class="a" style="left:5px;top:3px" width="12" height="13" viewBox="0 0 12 13"><path d="M6 1L10.500 5.500H8.500V12H3.500V5.500H1.500z" fill="#808080" stroke="#000"/></svg></div>
<div class="btn" style="left:224px;top:569px;width:23px;height:22px"><svg class="a" style="left:5px;top:3px" width="12" height="13" viewBox="0 0 12 13"><path d="M6 12L10.500 7.500H8.500V1H3.500V7.500H1.500z" fill="#808080" stroke="#000"/></svg></div>
<div class="t" style="left:502px;top:573px">итого позиций:</div>
<div class="edit face" style="left:585px;top:569px;width:56px;height:21px;padding-left:3px">4</div>
<div class="t" style="left:647px;top:573px">на сумму:</div>
<div class="t" style="left:121px;top:598px">комментарий</div>
<div class="edit" style="left:120px;top:613px;width:700px;height:21px"></div>
<div class="a" style="left:112px;top:649px;width:720px;height:2px;border-top:1px solid #ACA899;border-bottom:1px solid #fff"></div>
<div class="btn" style="left:120px;top:665px;width:25px;height:25px"><svg class="a" style="left:6px;top:5px" width="11" height="15" viewBox="0 0 11 15"><path d="M2 4.500Q2 1.500 5.500 1.500Q9 1.500 9 4.500Q9 6 7 7.200Q5.800 8 5.800 9.500" fill="none" stroke="#000" stroke-width="3.800"/><path d="M2 4.500Q2 1.500 5.500 1.500Q9 1.500 9 4.500Q9 6 7 7.200Q5.800 8 5.800 9.500" fill="none" stroke="#FFFF00" stroke-width="1.800"/><circle cx="5.800" cy="12.800" r="1.300" fill="#FFFF00" stroke="#000" stroke-width=".9"/></svg></div>
<div class="btn" style="left:483px;top:665px;width:81px;height:25px;padding:6px 16px 0 0">Создать<div class="a" style="left:61px;top:10px;border:4px solid transparent;border-top:4px solid #000;border-bottom:0"></div></div>
<div class="btn" style="left:569px;top:665px;width:81px;height:25px;padding:6px 29px 0 0">Печать<div class="a" style="left:59px;top:10px;border:4px solid transparent;border-top:4px solid #000;border-bottom:0"></div></div>
<div class="btn" style="left:655px;top:665px;width:81px;height:25px;padding:6px 0 0 13px;text-align:left">Сохранить</div>
<div class="a" style="left:686px;top:327px;width:431px;height:406px;background:#0831D9;border-radius:8px 8px 0 0;overflow:hidden;box-shadow:inset 0 -1px 0 0 #00108C,inset 0 -2px 0 0 #0020B4,inset 0 0 0 1px #0A2CD0,inset 0 0 0 2px #1464EE,inset 0 0 0 3px #0A50E0">
<div class="a" style="left:0;top:0;width:431px;height:29px;background:linear-gradient(#0058EE 0,#3593FF 4%,#288EFF 6%,#127DFF 8%,#036FFC 10%,#0262EE 14%,#0057E5 20%,#0054E3 24%,#0055EB 56%,#005BF5 66%,#0262FC 76%,#0066FF 86%,#005AF0 92%,#0046D0 98%,#0A3FD0 100%)"></div>
<div class="ttl" style="left:7px;top:9px;color:#fff;letter-spacing:-0.32px;text-shadow:1px 1px 0 #0A1883">Редактировать товар</div>
<div class="cb" style="left:405px;top:5px;background:linear-gradient(135deg,#F0A08C,#E0603C 45%,#C83C18);border-color:#fff"><svg class="a" style="left:3px;top:3px" width="13" height="13" viewBox="0 0 13 13"><path d="M2 2L11 11M11 2L2 11" stroke="#fff" stroke-width="2" stroke-linecap="round"/></svg></div>
<div class="a face" style="left:3px;top:29px;width:425px;height:374px;box-shadow:inset 1px 0 0 #F6F2E2,inset -1px 0 0 #F6F2E2,inset 0 -1px 0 #F6F2E2"></div>
</div>
<div class="grp" style="left:697px;top:370px;width:408px;height:105px"><span>Товар</span></div>
<div class="grp" style="left:697px;top:490px;width:408px;height:57px"><span>Параметры товара</span></div>
<div class="grp" style="left:697px;top:563px;width:408px;height:113px"><span>Приходование/списание</span></div>
<div class="t" style="left:714px;top:389px">артикул</div>
<div class="cbx edit" style="left:713px;top:404px;width:104px;height:21px"><span style="position:absolute;left:2px;top:3px;height:13px;width:54px;padding:1px 0 0 0;line-height:13px" class="sel">ОБ-000009</span></div>
<div class="dd" style="left:798px;top:406px;height:17px"></div>
<div class="t" style="left:833px;top:389px">штрих-код</div>
<div class="cbx edit" style="left:833px;top:404px;width:120px;height:21px"></div>
<div class="dd" style="left:934px;top:406px;height:17px"></div>
<div class="btn" style="left:1017px;top:403px;width:23px;height:22px"><svg class="a" style="left:4px;top:2px" width="15" height="15" viewBox="0 0 15 15"><path d="M2.500 3.500L4.500 1.500H12.500V11.500L10.500 13.500H2.500z" fill="#A4A4A4" stroke="#000" stroke-width="1.300"/><path d="M2.500 3.500H10.500V13.500M10.500 3.500L12.500 1.500" fill="none" stroke="#000"/></svg></div>
<div class="btn" style="left:1041px;top:403px;width:23px;height:22px"><svg class="a" style="left:2px;top:2px" width="18" height="17" viewBox="0 0 18 17"><path d="M7.500 1H13.500L16.500 4V10L13.500 13H7.500L4.500 10V4z" fill="#fff" stroke="#000" stroke-width="1.200"/><path d="M12.500 4v3" stroke="#808080"/><path d="M5.500 11.500L2 15" stroke="#000" stroke-width="2.400" stroke-linecap="round"/></svg></div>
<div class="btn" style="left:1065px;top:403px;width:23px;height:22px"><svg class="a" style="left:4px;top:3px" width="14" height="15" viewBox="0 0 14 15"><path d="M3.300 14.300L8.300 2.800L13.300 14.300M5.300 10.300H11.300" fill="none" stroke="#C8C8D0" stroke-width="2"/><path d="M2.500 13.500L7.500 2L12.500 13.500M4.500 9.500H10.500" fill="none" stroke="#2A2A2A" stroke-width="2.200" stroke-dasharray="2 .4"/></svg></div>
<div class="t" style="left:714px;top:429px">наименование</div>
<div class="cbx edit" style="left:713px;top:444px;width:296px;height:21px;padding-left:3px">Сапоги женские красные</div>
<div class="dd" style="left:990px;top:446px;height:17px"></div>
<div class="btn" style="left:1025px;top:440px;width:63px;height:25px;padding-top:5px;color:#ACA899;text-shadow:1px 1px 0 #fff">Найти...</div>
<div class="t" style="left:850px;top:502px">Размер</div>
<div class="cbx edit" style="left:849px;top:517px;width:112px;height:21px;padding-left:3px">р/обуви 39</div>
<div class="dd" style="left:942px;top:519px;height:17px"></div>
<div class="t" style="left:978px;top:502px">Цвет</div>
<div class="cbx edit" style="left:977px;top:517px;width:112px;height:21px;padding-left:3px">&lt;нет&gt;</div>
<div class="dd" style="left:1070px;top:519px;height:17px"></div>
<div class="t" style="left:714px;top:583px">количество</div>
<div class="edit" style="left:713px;top:598px;width:105px;height:21px;text-align:right;padding-right:3px">4</div>
<div class="t" style="left:833px;top:583px">ед. измерения</div>
<div class="cbx edit" style="left:833px;top:598px;width:120px;height:21px;padding-left:3px">пара</div>
<div class="dd" style="left:934px;top:600px;height:17px"></div>
<div class="t" style="left:969px;top:583px">цена</div>
<div class="edit" style="left:969px;top:598px;width:121px;height:21px;text-align:right;padding-right:3px">2 050,00</div>
<div class="t" style="left:969px;top:631px">сумма</div>
<div class="edit face" style="left:969px;top:646px;width:121px;height:21px;text-align:right;padding-right:3px">8 200,00</div>
<div class="btn" style="left:705px;top:695px;width:25px;height:25px"><svg class="a" style="left:6px;top:5px" width="11" height="15" viewBox="0 0 11 15"><path d="M2 4.500Q2 1.500 5.500 1.500Q9 1.500 9 4.500Q9 6 7 7.200Q5.800 8 5.800 9.500" fill="none" stroke="#000" stroke-width="3.800"/><path d="M2 4.500Q2 1.500 5.500 1.500Q9 1.500 9 4.500Q9 6 7 7.200Q5.800 8 5.800 9.500" fill="none" stroke="#FFFF00" stroke-width="1.800"/><circle cx="5.800" cy="12.800" r="1.300" fill="#FFFF00" stroke="#000" stroke-width=".9"/></svg></div>
<div class="btn" style="left:947px;top:695px;width:75px;height:25px;padding-top:5px">Ok</div>
<div class="btn" style="left:1027px;top:695px;width:75px;height:25px;padding-top:5px">Отмена</div>
</div></body></html>
